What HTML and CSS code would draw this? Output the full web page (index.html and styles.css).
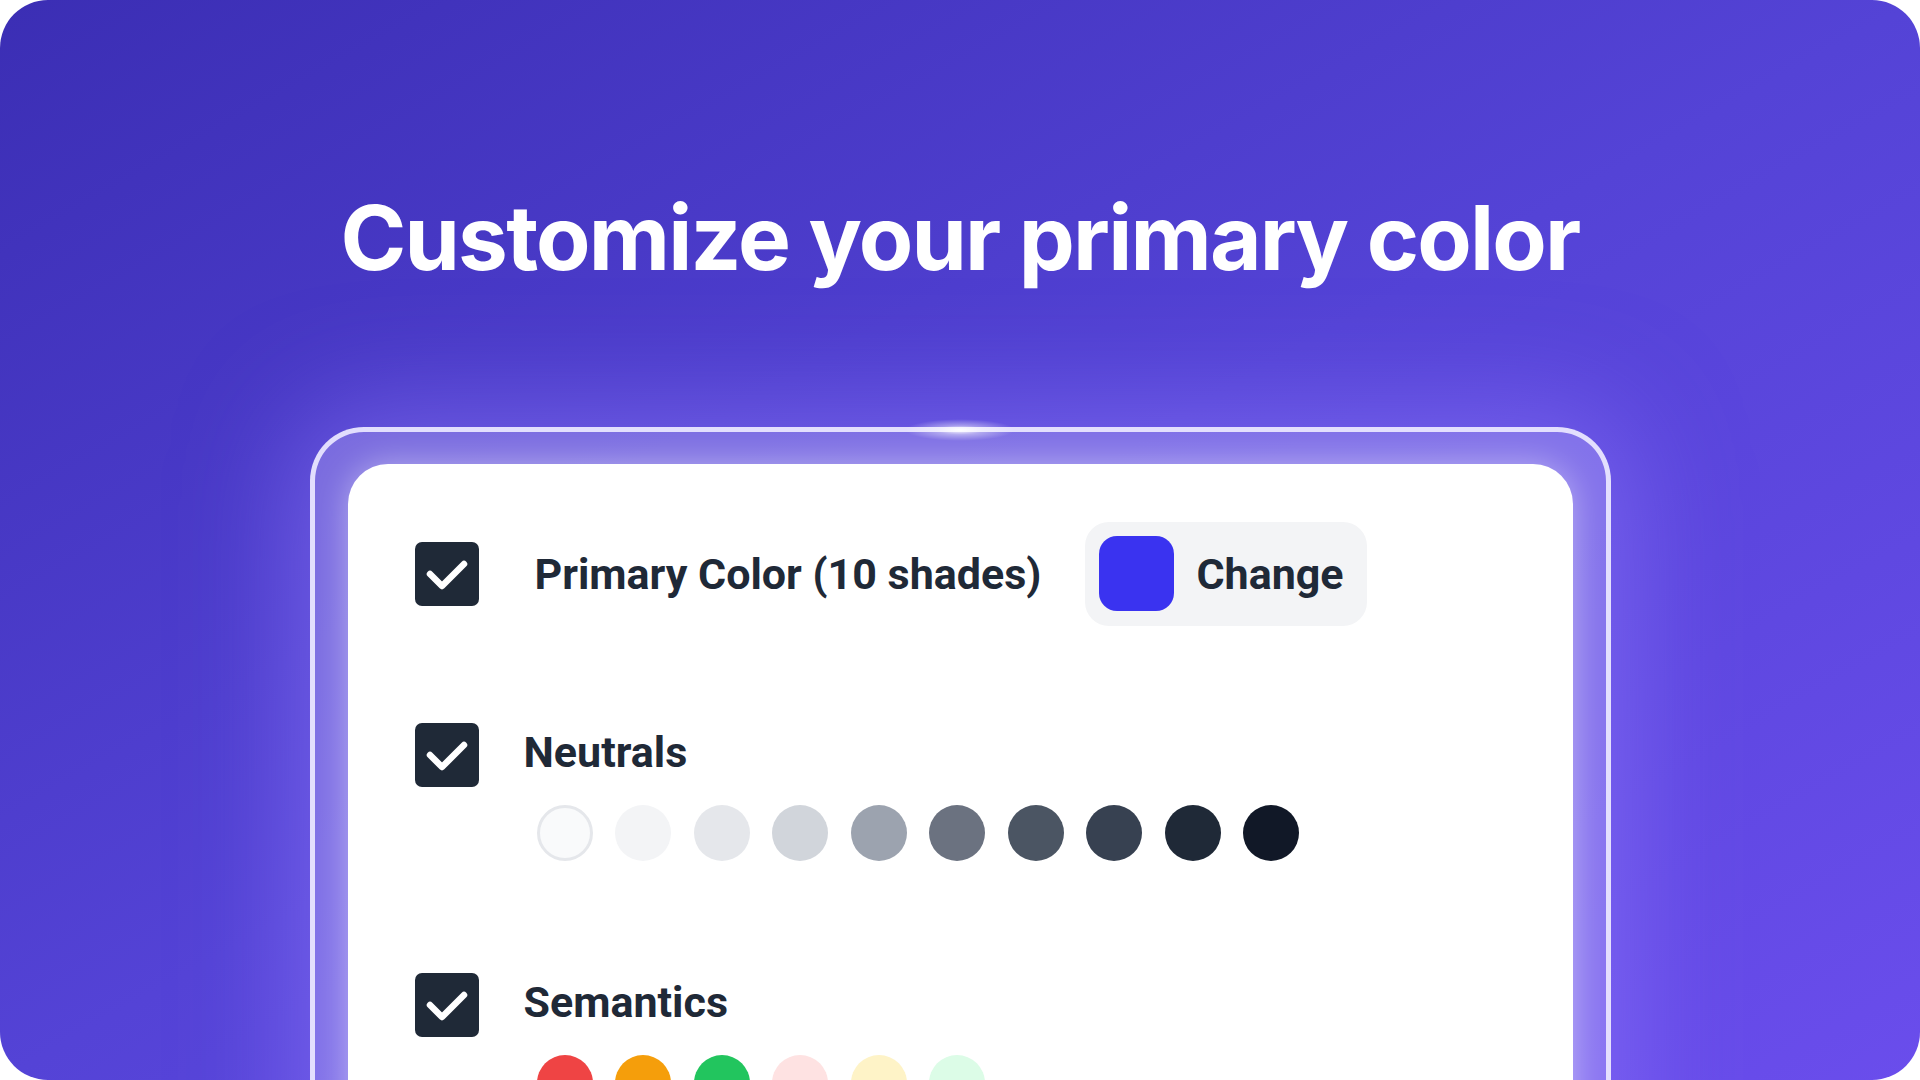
FILE: index.html
```html
<!DOCTYPE html>
<html lang="en">
<head>
  <meta charset="UTF-8" />
  <title>Customize your primary color</title>
  <link rel="stylesheet" href="styles.css">
</head>
<body>

  <div class="screen">
    <h1>Customize your primary color</h1>

    <div class="frame">
      <div class="card">

        <div class="row row-primary">
          <span class="check">
            <svg viewBox="0 0 64 64" width="64" height="64"><polyline points="15,32 27,44 49,22" /></svg>
          </span>
          <span class="label label-primary">Primary Color (10 shades)</span>
          <button class="chip" type="button">
            <span class="chip-swatch"></span>
            <span class="label">Change</span>
          </button>
        </div>

        <div class="row row-neutrals">
          <span class="check">
            <svg viewBox="0 0 64 64" width="64" height="64"><polyline points="15,32 27,44 49,22" /></svg>
          </span>
          <div class="group">
            <div class="label title">Neutrals</div>
            <div class="dots">
              <span class="dot dot-outline" style="background:#f9fafb"></span>
              <span class="dot" style="background:#f3f4f6"></span>
              <span class="dot" style="background:#e5e7eb"></span>
              <span class="dot" style="background:#d1d5db"></span>
              <span class="dot" style="background:#9ca3af"></span>
              <span class="dot" style="background:#6b7280"></span>
              <span class="dot" style="background:#4b5563"></span>
              <span class="dot" style="background:#374151"></span>
              <span class="dot" style="background:#1f2937"></span>
              <span class="dot" style="background:#111827"></span>
            </div>
          </div>
        </div>

        <div class="row">
          <span class="check">
            <svg viewBox="0 0 64 64" width="64" height="64"><polyline points="15,32 27,44 49,22" /></svg>
          </span>
          <div class="group">
            <div class="label title">Semantics</div>
            <div class="dots">
              <span class="dot" style="background:#ef4444"></span>
              <span class="dot" style="background:#f59e0b"></span>
              <span class="dot" style="background:#22c55e"></span>
              <span class="dot" style="background:#fee2e2"></span>
              <span class="dot" style="background:#fef3c7"></span>
              <span class="dot" style="background:#dcfce7"></span>
            </div>
          </div>
        </div>

      </div>
    </div>
  </div>

</body>
</html>
```

FILE: styles.css
```css
* {
  box-sizing: border-box;
}

body {
  margin: 0;
  background: #fff;
}

.screen {
  width: 1920px;
  height: 1080px;
  border-radius: 48px;
  overflow: hidden;
  background: linear-gradient(to bottom right, #3b2eb4 0%, #5443d6 50%, #6a4dec 100%);
  display: flex;
  flex-direction: column;
  align-items: center;
  padding-top: 188px;
}

h1 {
  margin: 0;
  font-family: Inter, 'Noto Sans', sans-serif;
  font-weight: 700;
  font-size: 89px;
  line-height: 100px;
  letter-spacing: -1.8px;
  color: #fff;
}

/* glass frame around the card */
.frame {
  position: relative;
  flex-shrink: 0;
  width: 1301px;
  height: 800px;
  margin-top: 139px;
  padding: 32px 33px 0;
  border: 5px solid rgba(236, 232, 255, 0.92);
  border-radius: 54px;
  background: rgba(190, 178, 255, 0.42);
  box-shadow: 0 0 110px 18px rgba(150, 128, 255, 0.5);
}

.frame::before {
  content: '';
  position: absolute;
  left: 50%;
  top: -13px;
  width: 110px;
  height: 22px;
  margin-left: -55px;
  border-radius: 50%;
  background: radial-gradient(ellipse at center, rgba(255, 255, 255, 1) 0%, rgba(255, 255, 255, 0.4) 30%, rgba(255, 255, 255, 0) 70%);
}

.card {
  height: 900px;
  background: #fff;
  border-radius: 40px;
  padding: 58px 67px;
  box-shadow: 0 0 34px rgba(255, 255, 255, 0.45);
  font-family: Roboto, 'Liberation Sans', sans-serif;
  color: #1f2937;
}

.row {
  display: flex;
  align-items: flex-start;
}

.row-primary {
  align-items: center;
  margin-bottom: 97px;
}

.row-neutrals {
  margin-bottom: 112px;
}

.check {
  flex-shrink: 0;
  width: 64px;
  height: 64px;
  border-radius: 7px;
  background: #1f2937;
}

.check svg {
  display: block;
  fill: none;
  stroke: #fff;
  stroke-width: 6.5;
  stroke-linecap: round;
  stroke-linejoin: round;
}

.label {
  font-size: 43px;
  font-weight: 700;
  white-space: nowrap;
}

.label-primary {
  margin-left: 56px;
}

.chip {
  display: flex;
  align-items: center;
  gap: 22px;
  margin-left: 44px;
  padding: 14px 23px 15px 14px;
  border: none;
  border-radius: 24px;
  background: #f3f4f6;
  font-family: inherit;
  color: inherit;
}

.chip-swatch {
  width: 75px;
  height: 75px;
  border-radius: 18px;
  background: #3a33f0;
}

.group {
  margin-left: 45px;
}

.title {
  line-height: 58.6px;
}

.dots {
  display: flex;
  gap: 22.5px;
  margin-top: 23.4px;
  margin-left: 13px;
}

.dot {
  width: 56px;
  height: 56px;
  border-radius: 50%;
}

.dot-outline {
  border: 3px solid #e5e7eb;
}
```
